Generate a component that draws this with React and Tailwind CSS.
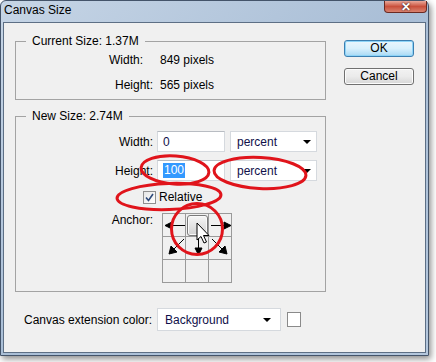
import React from 'react'

const font = { fontFamily: '"Liberation Sans", Arial, sans-serif' }

function GroupBox({ label, className, children }) {
  return (
    <div className={`relative border border-[#a3a3a3] ${className}`}>
      <span className="absolute -top-[8px] left-[10px] bg-[#f0f0f0] px-[6px] text-[12px] leading-[14px]">{label}</span>
      {children}
    </div>
  )
}

function TextBox({ value, selected }) {
  return (
    <div className="w-[68px] h-[21px] bg-white border border-[#d5d9de] border-t-[#b8bcc2] flex items-center pl-[5px]">
      {selected ? (
        <span className="bg-[#3399ff] text-white leading-[15px] px-[1px]">{value}</span>
      ) : (
        <span className="text-[#10104a]">{value}</span>
      )}
    </div>
  )
}

function Select({ value, width }) {
  return (
    <div className={`${width} h-[21px] bg-white border border-[#d5d9de] flex items-center justify-between pl-[6px] pr-[5px]`}>
      <span className="text-[#10104a]">{value}</span>
      <span className="w-0 h-0 border-l-[4px] border-r-[4px] border-t-[4px] border-l-transparent border-r-transparent border-t-black"></span>
    </div>
  )
}

function AnchorGrid() {
  const cells = Array.from({ length: 9 })
  return (
    <div className="relative w-[70px] h-[70px] grid grid-cols-3 grid-rows-3 border-l border-t border-[#9a9a9a]">
      {cells.map((_, i) => (
        <div key={i} className="border-r border-b border-[#9a9a9a] flex items-center justify-center">
          {i === 1 && (
            <div className="w-[21px] h-[21px] rounded-[3px] border border-[#7a7a7a] bg-gradient-to-b from-[#f6f6f6] to-[#d2d2d2] shadow-[inset_0_0_0_1px_#fafafa]"></div>
          )}
        </div>
      ))}
      <svg className="absolute top-0 left-0 pointer-events-none" width="70" height="70" viewBox="0 0 70 70">
        <g stroke="#000" strokeWidth="1" fill="#000">
          <line x1="22" y1="11.5" x2="6" y2="11.5" />
          <polygon points="2,11.5 9,8 9,15" />
          <line x1="48" y1="11.5" x2="64" y2="11.5" />
          <polygon points="68,11.5 61,8 61,15" />
          <line x1="35.5" y1="24" x2="35.5" y2="37" />
          <polygon points="35.5,41 32,34 39,34" />
          <line x1="21" y1="25" x2="9" y2="37" />
          <polygon points="6,40 8,32 14,38" />
          <line x1="49" y1="25" x2="61" y2="37" />
          <polygon points="64,40 62,32 56,38" />
        </g>
      </svg>
    </div>
  )
}

export default function App() {
  return (
    <div className="relative w-[436px] h-[362px] bg-white text-[12px] text-black overflow-hidden" style={font}>
      {/* ventana */}
      <div className="w-[429px] h-[356px] flex flex-col border border-[#44546a] rounded-t-[6px] bg-gradient-to-br from-[#c6d5e6] via-[#a9bed6] to-[#b4c7dd] shadow-[2px_3px_6px_rgba(0,0,0,0.45)]">
        {/* barra de titulo */}
        <div className="h-[21px] flex items-start justify-between">
          <span className="pl-[3px] pt-[2px] text-[12px] leading-[15px] text-black">Canvas Size</span>
          <div className="w-[43px] h-[12px] mr-[1px] rounded-b-[4px] border border-t-0 border-[#6b2a22] bg-gradient-to-b from-[#e9a99b] via-[#c9503c] to-[#d8826f] flex items-center justify-center">
            <span className="text-white text-[12px] font-bold leading-[10px]" style={{ textShadow: '0 0 2px #000' }}>✕</span>
          </div>
        </div>
        {/* contenido */}
        <div className="flex-1 mx-[2px] mb-[2px] border border-[#5d6f85] bg-[#f0f0f0] flex">
          <div className="ml-[11px] w-[311px] pt-[18px] flex flex-col">
            <GroupBox label="Current Size: 1.37M" className="h-[59px] pt-[11px]">
              <div className="flex flex-col gap-[10px] leading-[15px]">
                <div className="flex">
                  <span className="w-[132px] text-right pr-[5px]">Width:</span>
                  <span className="ml-[12px]">849 pixels</span>
                </div>
                <div className="flex">
                  <span className="w-[137px] text-right">Height:</span>
                  <span className="ml-[7px]">565 pixels</span>
                </div>
              </div>
            </GroupBox>
            <GroupBox label="New Size: 2.74M" className="mt-[16px] h-[176px] pt-[14px]">
              <div className="flex items-center">
                <span className="w-[137px] text-right">Width:</span>
                <div className="ml-[4px]"><TextBox value="0" /></div>
                <div className="ml-[5px]"><Select value="percent" width="w-[87px]" /></div>
              </div>
              <div className="flex items-center mt-[8px]">
                <span className="w-[137px] text-right">Height:</span>
                <div className="ml-[4px]"><TextBox value="100" selected /></div>
                <div className="ml-[5px]"><Select value="percent" width="w-[87px]" /></div>
              </div>
              <div className="flex items-center mt-[9px] ml-[127px]">
                <span className="w-[13px] h-[13px] border border-[#8f8f8f] bg-gradient-to-br from-[#e6e6e6] to-white flex items-center justify-center">
                  <svg width="9" height="9" viewBox="0 0 9 9">
                    <path d="M1 4.5 L3.5 7.5 L8 1" stroke="#2e4a7a" strokeWidth="1.6" fill="none" />
                  </svg>
                </span>
                <span className="ml-[3px] leading-[15px]">Relative</span>
              </div>
              <div className="flex items-start mt-[8px]">
                <span className="w-[137px] text-right leading-[15px] pt-[-0px]">Anchor:</span>
                <div className="ml-[9px]"><AnchorGrid /></div>
              </div>
            </GroupBox>
            <div className="flex items-center mt-[16px]">
              <span className="ml-[9px] w-[133px]">Canvas extension color:</span>
              <div className="w-[124px] h-[23px] bg-white border border-[#d5d9de] flex items-center justify-between pl-[7px] pr-[9px]">
                <span className="text-[#10104a]">Background</span>
                <span className="w-0 h-0 border-l-[4px] border-r-[4px] border-t-[4px] border-l-transparent border-r-transparent border-t-black"></span>
              </div>
              <div className="ml-[6px] w-[14px] h-[15px] bg-white border border-[#8a8a8a]"></div>
            </div>
          </div>
          <div className="ml-[18px] pt-[17px] flex flex-col gap-[11px]">
            <button className="w-[70px] h-[17px] rounded-[3px] border border-[#3c7fb1] bg-gradient-to-b from-[#eaf6fd] via-[#d9f0fc] to-[#a7d9f5] shadow-[inset_0_0_0_1px_#8ed4f7] text-[12px] leading-[15px]">OK</button>
            <button className="w-[70px] h-[17px] rounded-[3px] border border-[#707070] bg-gradient-to-b from-[#f2f2f2] via-[#ebebeb] to-[#d6d6d6] shadow-[inset_0_0_0_1px_#fcfcfc] text-[12px] leading-[15px]">Cancel</button>
          </div>
        </div>
      </div>

      {/* marcas rojas y cursor */}
      <svg className="absolute top-0 left-0 pointer-events-none" width="436" height="362" viewBox="0 0 436 362">
        <g stroke="#e0141b" strokeWidth="3" fill="none">
          <ellipse cx="175" cy="170" rx="34" ry="14" transform="rotate(4 175 170)" />
          <ellipse cx="260" cy="173" rx="46" ry="15.5" transform="rotate(3 260 173)" />
          <ellipse cx="169" cy="196.5" rx="52" ry="13" transform="rotate(-2 169 196.5)" />
          <circle cx="197" cy="229" r="25.5" />
        </g>
        <path d="M197 223 L197 240 L201 236.5 L204 243 L206.5 242 L203.5 235.5 L209 235.5 Z" fill="#fff" stroke="#000" strokeWidth="1" strokeLinejoin="round" />
      </svg>
    </div>
  )
}
